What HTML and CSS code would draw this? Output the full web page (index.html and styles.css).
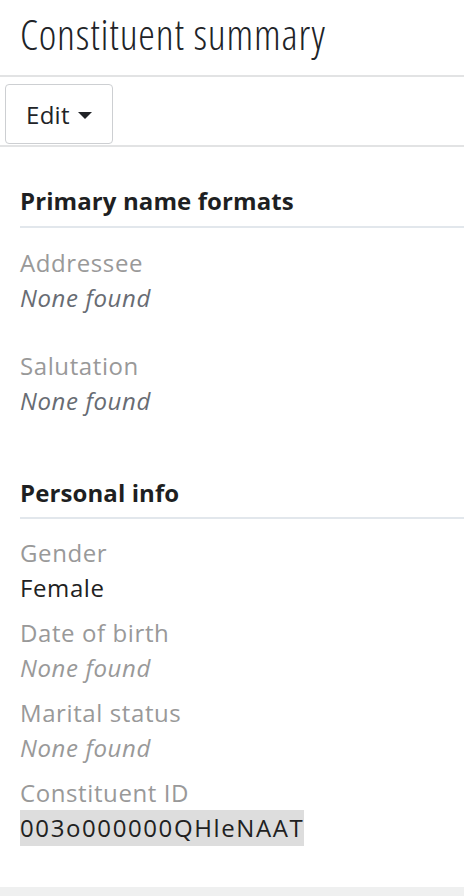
FILE: index.html
```html
<!DOCTYPE html>
<html lang="en">
<head>
<meta charset="utf-8">
<title>Constituent summary</title>
<link rel="stylesheet" href="styles.css">
</head>
<body>
<header class="page-header">
  <h1 class="page-title">Constituent summary</h1>
</header>
<div class="toolbar">
  <button class="btn" type="button">Edit <span class="caret"></span></button>
</div>
<main class="content">
  <section class="section section-names">
    <h2 class="section-title">Primary name formats</h2>
    <div class="field">
      <div class="label">Addressee</div>
      <div class="value empty dark">None found</div>
    </div>
    <div class="field">
      <div class="label">Salutation</div>
      <div class="value empty dark">None found</div>
    </div>
  </section>
  <section class="section section-personal">
    <h2 class="section-title">Personal info</h2>
    <div class="field">
      <div class="label">Gender</div>
      <div class="value">Female</div>
    </div>
    <div class="field">
      <div class="label">Date of birth</div>
      <div class="value empty">None found</div>
    </div>
    <div class="field">
      <div class="label">Marital status</div>
      <div class="value empty">None found</div>
    </div>
    <div class="field">
      <div class="label">Constituent ID</div>
      <div class="value"><span class="highlight">003o000000QHleNAAT</span></div>
    </div>
  </section>
</main>
<footer class="footer"></footer>
</body>
</html>
```

FILE: styles.css
```css
html, body {
  margin: 0;
  padding: 0;
  background: #ffffff;
}

body {
  font-family: "Open Sans", "Noto Sans", sans-serif;
  color: #212121;
  font-size: 24px;
  line-height: 35px;
  letter-spacing: 0.6px;
}

.page-header {
  height: 75px;
  border-bottom: 2px solid #e2e3e4;
  box-sizing: content-box;
  padding: 0 20px;
}

.page-title {
  margin: 0;
  padding-top: 9px;
  font-size: 42px;
  line-height: 50px;
  font-weight: 350;
  font-stretch: 80%;
  color: #212327;
  letter-spacing: 0.8px;
}

.toolbar {
  padding: 7px 5px 1px;
  border-bottom: 2px solid #e2e3e4;
  display: flex;
}

.btn {
  display: flex;
  align-items: center;
  gap: 8px;
  height: 60px;
  width: 108px;
  padding: 0 0 0 20px;
  border: 1px solid #cdcfd2;
  border-radius: 4px;
  background: #ffffff;
  font-family: inherit;
  font-size: 24px;
  letter-spacing: 0.3px;
  color: #212327;
  box-sizing: border-box;
}

.caret {
  width: 0;
  height: 0;
  border-left: 7px solid transparent;
  border-right: 7px solid transparent;
  border-top: 7px solid #212327;
  margin-top: 2px;
}

.content {
  padding: 0 0 41px 20px;
}

.section-title {
  margin: 0;
  font-size: 24px;
  font-weight: 700;
  line-height: 35px;
  letter-spacing: 0.1px;
  color: #1e1f22;
  padding-bottom: 8px;
  border-bottom: 2px solid #e2e7ec;
}

.section-names {
  padding-top: 36px;
}

.section-names .section-title {
  margin-bottom: 17px;
}

.section-names .field + .field {
  margin-top: 33px;
}

.section-personal {
  padding-top: 57px;
}

.section-personal .section-title {
  padding-bottom: 7px;
  margin-bottom: 16px;
}

.section-personal .field + .field {
  margin-top: 10px;
}

.label {
  color: #999999;
}

.value {
  color: #212121;
}

.value.empty {
  font-style: italic;
  color: #999999;
}

.value.empty.dark {
  color: #686c73;
}

.highlight {
  display: inline-block;
  background: #dddddd;
  height: 36px;
  letter-spacing: 1.6px;
}

.footer {
  height: 10px;
  background: #eff0f0;
}
```
